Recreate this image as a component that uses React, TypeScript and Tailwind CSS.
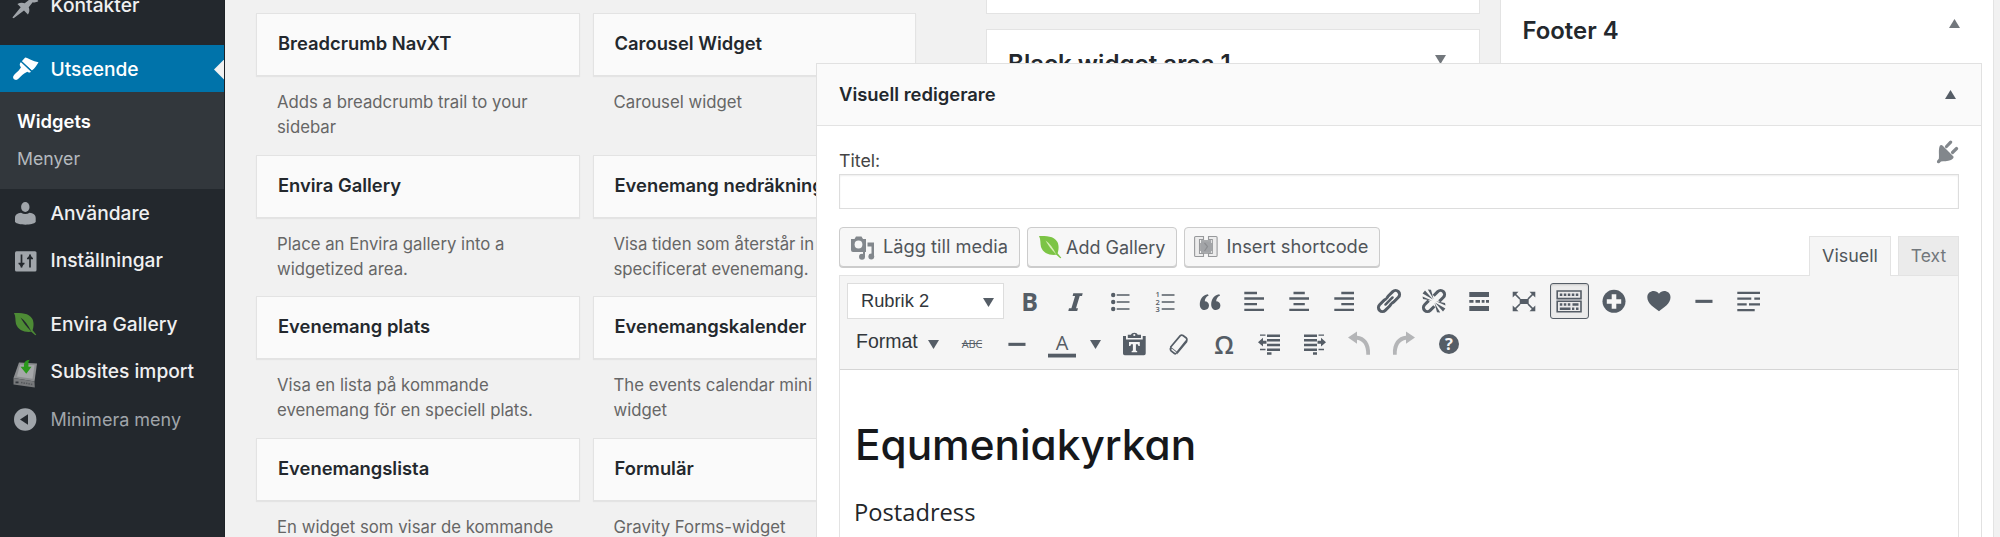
import React from 'react';

type Kids = { children?: React.ReactNode };

function Glyph({ children, className = '' }: Kids & { className?: string }) {
  return (
    <svg width="28" height="28" viewBox="0 0 28 28" fill="currentColor" className={`block shrink-0 overflow-visible ${className}`}>
      {children}
    </svg>
  );
}

/* ---------- sidebar icons ---------- */

const Leaf = ({ dark, light }: { dark: string; light: string }) => (
  <>
    <path d="M3 3C10 3.2 18 2.600 21.400 9C23.400 13 22.400 18 21.600 20.300L25.300 24.700L24.300 25.300L20.300 21.800C13 22.500 7 20 5 14C4 10.500 5 6.500 3 3Z" fill={light} />
    <path d="M9.500 7.500C12 12 15 16 20.300 21.500C17 15 14 10.500 9.500 7.500Z" fill={dark} />
  </>
);

const PinIcon = (
  <Glyph>
    <path d="M2 26.500L10.300 16.300L7 13C9.500 11.500 12 11.300 14.300 12.300L19.500 8.200C19 6 19.400 4 20.500 2.800L28 10C26 11.500 24 11.700 22.300 11.200L18.300 16.200C19.400 18.800 19 21.500 17.500 23.500L13.600 19.600L3.200 27.300Z" transform="translate(-.6 -1)" />
  </Glyph>
);

const BrushIcon = (
  <Glyph>
    <path d="M14.200 2.500C17 3 22 6.500 27.500 7.200C26 9.500 24 13.500 20.800 15.600L10.800 6.300Z" />
    <path d="M10 7.100L20 16.400C19 17.800 17.500 18 16.300 16.800L13.200 18.600C10.500 20 8.300 24 6 24.800C3.500 25.500 1.300 23.300 2.400 21C3.500 18.500 7.500 16.500 9 13.800L10 12.300C8.300 11 8.300 8.500 10 7.100Z" />
    <path d="M10.400 6.700L20.400 16" stroke="#0073aa" strokeWidth="1.100" />
  </Glyph>
);

const UserIcon = (
  <Glyph>
    <ellipse cx="14.300" cy="8" rx="4.200" ry="5" />
    <path d="M4 23V19C4 15.500 6.500 14 10 13.700C12.500 15.300 16 15.300 18.600 13.700C22 14 24.700 15.500 24.700 19V23C22 26.500 7 26.500 4 23Z" />
  </Glyph>
);

const SlidersIcon = (
  <Glyph>
    <rect x="4" y="4.200" width="21.500" height="20.300" rx="1.500" />
    <path d="M10.500 7.500V20.500M7.500 16.500H13.500M19 7.500V20.500M16 11.500H22" stroke="#23282d" strokeWidth="1.700" />
    <path d="M8 17L10.500 20.500L13 17ZM16.500 11L19 7.500L21.500 11Z" fill="#23282d" />
  </Glyph>
);

const DiskIcon = (
  <Glyph>
    <path d="M8 4.500L26 5.500L23.500 23.500L2.500 20Z" fill="#8b8d8f" />
    <path d="M2.500 20L23.500 23.500L23.800 29.500L2.500 26.500Z" fill="#77797b" />
    <path d="M9 6.500L23.500 7.200L21.500 20.800L6 18.500Z" fill="#a5a7a9" />
    <path d="M4.500 23.500h3v1.800h-3z" fill="#32373c" />
    <path d="M10 24.500L21.500 26.500" stroke="#55585b" strokeWidth="1.500" strokeDasharray="1.500 1" />
    <path d="M19.500 1.800C17 2.500 17.500 5 17.500 8.800H20.500L15.300 15.700L9.500 8.800H13C12.800 5 14 1.800 19.500 1.800Z" fill="#2b9a1c" />
  </Glyph>
);

const CollapseIcon = (
  <Glyph>
    <circle cx="14.200" cy="13.500" r="11.200" />
    <path d="M9 13.500L17 8.300V18.700Z" fill="#23282d" />
  </Glyph>
);

/* ---------- toolbar icons ---------- */

const ItalicIcon = (
  <Glyph>
    <path d="M12.300 6.300H21.700L21 9H18.700L15 21.300H17L16.200 24H7.300L8 21.300H10.400L14.100 9H11.600Z" />
  </Glyph>
);

const BulletsIcon = (
  <Glyph>
    <circle cx="7.200" cy="8" r="2.200" />
    <circle cx="7.200" cy="15" r="2.200" />
    <circle cx="7.200" cy="22" r="2.200" />
    <path d="M10.700 8H23.500M10.700 15H23.500M10.700 22H23.500" stroke="currentColor" strokeWidth="1.600" />
  </Glyph>
);

const NumbersIcon = (
  <Glyph>
    <g fontFamily="Open Sans, sans-serif" fontSize="7.500" fontWeight="600">
      <text x="4.500" y="10.200">1</text>
      <text x="4.500" y="17.500">2</text>
      <text x="4.500" y="24.700">3</text>
    </g>
    <path d="M10.700 8H23.500M10.700 15H23.500M10.700 22H23.500" stroke="currentColor" strokeWidth="1.600" />
  </Glyph>
);

const quoteMark = 'M11.800 7.200C6.500 8 3.800 12.500 3.800 17.500C3.800 21 5.800 23 8.600 23C11.200 23 13 21.200 13 18.600C13 16 11.200 14.300 8.800 14.300C8.900 12 10 9.800 12.700 8.600Z';

const QuoteIcon = (
  <Glyph>
    <path d={quoteMark} />
    <path d={quoteMark} transform="translate(11.400)" />
  </Glyph>
);

const Lines = ({ d }: { d: string }) => (
  <Glyph>
    <path d={d} stroke="currentColor" strokeWidth="2.300" fill="none" />
  </Glyph>
);

const LinkIcon = (
  <Glyph>
    <g transform="translate(14 14) rotate(-45)" fill="none">
      <rect x="-13.300" y="-4" width="14.600" height="8" rx="4" stroke="currentColor" strokeWidth="3" />
      <rect x="-1.300" y="-4" width="14.600" height="8" rx="4" stroke="currentColor" strokeWidth="3" />
      <path d="M-5.500 0H5.500" stroke="#f5f5f5" strokeWidth="4.600" strokeLinecap="round" />
      <path d="M-5 0H5" stroke="currentColor" strokeWidth="2.500" strokeLinecap="round" />
    </g>
  </Glyph>
);

const UnlinkIcon = (
  <Glyph>
    <g transform="translate(14 14) rotate(-45)" fill="none" stroke="currentColor">
      <path d="M-3.500 -4H-9.300A4 4 0 0 0 -9.300 4H-3.500M3.500 -4H9.300A4 4 0 0 1 9.300 4H3.500" strokeWidth="3" />
    </g>
    <path d="M2.600 6.500L5 3.500L13 12.500ZM7.800 2.500L11 2.700L13.500 12ZM2.500 9.500L3 12L12 13.800ZM25.400 21.500L23 24.500L15 15.500ZM20.200 25.500L17 25.300L14.500 16ZM25.500 18.500L25 16L16 14.200Z" />
  </Glyph>
);

const MoreIcon = (
  <Glyph>
    <path d="M4.300 5H24V10H4.300ZM4.300 13H8.500V15.800H4.300ZM10.500 13H15V15.800H10.500ZM16.700 13H19.500V15.800H16.700ZM21 13H24V15.800H21ZM4.300 19H24V24H4.300Z" />
  </Glyph>
);

const FullscreenIcon = (
  <Glyph>
    <path d="M9.700 12H18.700V17H9.700Z" />
    <path d="M4 6L10 12M24 6L18 12M4 23L10 17M24 23L18 17" stroke="currentColor" strokeWidth="1.700" />
    <path d="M2.700 4.700H8.500L2.700 10.500ZM25.300 4.700H19.500L25.300 10.500ZM2.700 24.200H8.500L2.700 18.500ZM25.300 24.200H19.500L25.300 18.500Z" />
  </Glyph>
);

const KitchenIcon = (
  <Glyph>
    <path d="M2.200 4H26V11.600H2.200ZM2.200 14.200H26V24.800H2.200Z" fill="none" stroke="currentColor" strokeWidth="1.600" />
    <path d="M4.800 7.800H23.500M4.800 17.500H16" stroke="currentColor" strokeWidth="2.400" strokeDasharray="2.500 1.500" />
    <path d="M17.500 17.500H23.500M4.800 21.700H15.500M17 21.700H19.300M21 21.700H23.500" stroke="currentColor" strokeWidth="2.400" />
  </Glyph>
);

const PlusIcon = (
  <Glyph>
    <circle cx="14" cy="14.300" r="11.500" />
    <path d="M14 7.300V21.700M6.800 14.500H21.200" stroke="#f5f5f5" strokeWidth="4.600" />
  </Glyph>
);

const HeartIcon = (
  <Glyph>
    <path d="M14 24.300C9 20.500 2.300 16.500 2.300 10.300C2.300 4 10.500 2 14 6.700C17.500 2 25.500 4 25.500 10.300C25.500 16.500 19 20.500 14 24.300Z" />
  </Glyph>
);

const DashIcon = (
  <Glyph>
    <path d="M5.400 12.800H22.500V15.900H5.400Z" />
  </Glyph>
);

const ColorIcon = (
  <Glyph>
    <path d="M0 23.700H28V27.500H0Z" />
    <text x="14" y="19.700" textAnchor="middle" fontSize="20" fontFamily="Open Sans, sans-serif">A</text>
  </Glyph>
);

const PasteIcon = (
  <Glyph>
    <path d="M3 6H6V9.500H22.700V6H25.700V23.500Q25.700 25.200 24 25.200H4.700Q3 25.200 3 23.500Z" />
    <path d="M7.800 8V4.800H11C11.500 2 17.200 2 17.700 4.800H21V8Z" />
    <circle cx="14.300" cy="5" r="1.100" fill="#f5f5f5" />
    <path d="M9 12H19.800V16H18.500L17.700 14.300H15.900V20.500L17.200 21.200V22.200H11.600V21.200L12.900 20.500V14.300H11.100L10.300 16H9Z" fill="#f5f5f5" />
  </Glyph>
);

const EraserIcon = (
  <Glyph>
    <path d="M5.500 17.200L15.300 5.700Q16.500 4.500 18 5.500L21.300 8Q22.500 9 21.500 10.500L12.300 22" fill="none" stroke="currentColor" strokeWidth="1.700" />
    <path d="M5.400 16.500L12.700 22.200L11.500 24Q10.300 25.200 9 24.300L5.500 21.500Q4.500 20.300 4.500 18.800ZM12.300 22.500L22.400 9.500V12L12 24.500Z" />
    <path d="M6.800 18.600L11.300 22.200L10.300 23L6.300 20Z" fill="#f5f5f5" />
  </Glyph>
);

const Indent = ({ flip = false }: { flip?: boolean }) => (
  <Glyph>
    <path d={flip ? 'M4 5.700H17M4 10.300H17M4 15H17M4 19.700H17M13 23.500H17' : 'M12 5.700H25M12 10.300H25M12 15H25M12 19.700H25M12 23.500H16.500'} stroke="currentColor" strokeWidth="2.500" />
    <path d={flip ? 'M18.500 5.200H24M18.500 19.500H24' : 'M5 5.200H10.500M5 19.500H10.500'} stroke="currentColor" strokeWidth="1.300" />
    <path d={flip ? 'M26 12.200L21 7.800V10.700H17.500V13.700H21V16.600Z' : 'M3 12.200L8 7.800V10.700H11.500V13.700H8V16.600Z'} />
  </Glyph>
);

const UndoIcon = ({ flip = false }: { flip?: boolean }) => (
  <Glyph className="text-[#b4b5b7]">
    <g transform={flip ? 'translate(28 0) scale(-1 1)' : undefined}>
      <path d="M3 7.500L12 1.500V5.800C20 6.500 25.800 13 25 24.700H21.300C21.500 15.500 18 10.500 12 9.700V13.800Z" />
    </g>
  </Glyph>
);

const HelpIcon = (
  <Glyph>
    <circle cx="14" cy="14" r="10" />
    <text x="14" y="20" textAnchor="middle" fontSize="16.500" fontWeight="700" fontFamily="Open Sans, sans-serif" fill="#f5f5f5">?</text>
  </Glyph>
);

const PlugIcon = (
  <Glyph className="text-[#82878c]">
    <path d="M6 8.500C7 7.500 8 8 9 9L19.500 19.500C20 21 18.500 22 17 23C13.500 24.500 9.500 24 7 24.500L5.500 26C3.500 27 2.300 25.500 3.300 23.500L4.800 21.800C5.500 18.500 4 12.500 6 8.500Z" />
    <path d="M12.500 9.500L16.700 5.200M18.500 15.500L22.600 11.500" stroke="currentColor" strokeWidth="3.200" strokeLinecap="round" />
  </Glyph>
);

const MediaIcon = (
  <Glyph className="text-[#82878c]">
    <path d="M2 6H5.500L7 3.500H12.500L14 6H17V19H4Q2 19 2 17Z" />
    <circle cx="9.500" cy="11.500" r="3.900" fill="#f7f7f7" />
    <path d="M18.500 9.500H25V23.700H22.500V13.500H18.500Z" />
    <circle cx="22.300" cy="23.500" r="2.900" />
    <circle cx="13" cy="23.700" r="3" />
    <path d="M14 19H16V24H14Z" />
  </Glyph>
);

const ShortcodeIcon = (
  <Glyph>
    <path d="M9 7H19V21H9Z" fill="#a9abad" />
    <path d="M6.500 10H21.500V18H6.500Z" fill="#a9abad" />
    <path d="M11.500 3.500H3.700Q2.600 3.500 2.600 4.600V22.400Q2.600 23.500 3.700 23.500H11.500V20.500H7.500V6.500H11.500ZM16.500 3.500H24Q25.100 3.500 25.100 4.600V22.400Q25.100 23.500 24 23.500H16.500V20.500H20.300V6.500H16.500Z" fill="#ececec" stroke="#97999b" strokeWidth="1.100" />
    <path d="M9 8.500H18.800V18.800H9Z" fill="#a2a4a7" />
    <path d="M12.500 10L15.500 13.500L12.500 18" fill="none" stroke="#8b8d90" strokeWidth="1.200" />
  </Glyph>
);

/* ---------- building blocks ---------- */

const Triangle = ({ up = false, className = '' }: { up?: boolean; className?: string }) => (
  <svg width="11" height="9" viewBox="0 0 11 9" fill="currentColor" className={`block shrink-0 ${className}`}>
    <path d={up ? 'M0 9L5.500 0L11 9Z' : 'M0 0H11L5.500 9Z'} />
  </svg>
);

function MenuItem({ icon, label, active = false, muted = false }: { icon: React.ReactNode; label: string; active?: boolean; muted?: boolean }) {
  const tone = active ? 'h-[47.300px] bg-[#0073aa] text-white' : 'h-[47.800px] text-[#a0a5aa]';
  return (
    <li className={`relative flex items-center gap-[11.500px] pl-[11px] ${tone}`}>
      {icon}
      <span className={muted ? 'text-[18px]' : active ? 'pt-px text-[19.200px] font-medium text-white' : 'text-[19.200px] font-medium text-[#f0f0f1]'}>{label}</span>
      {active && (
        <svg width="11.500" height="23" viewBox="0 0 11.500 23" className="absolute top-[12.500px] right-0">
          <path d="M11.500 0V23L0 11.500Z" fill="#f1f1f1" />
        </svg>
      )}
    </li>
  );
}

function Sidebar() {
  return (
    <nav className="w-[225px] shrink-0 overflow-hidden border-r border-[#1d2226] bg-[#23282d] leading-none">
      <ul className="-mt-[18.400px] -mr-px">
        <MenuItem icon={PinIcon} label="Kontakter" />
        <li className="h-[15.600px]" />
        <MenuItem icon={BrushIcon} label="Utseende" active />
        <li>
          <ul className="mr-px bg-[#32373c] pt-[9.500px] pb-[11px] pl-[17px] text-[18.400px] leading-[38.200px]">
            <li className="font-semibold text-white">Widgets</li>
            <li className="text-[17.700px] text-[#b4b9be]">Menyer</li>
          </ul>
        </li>
        <MenuItem icon={UserIcon} label="Användare" />
        <MenuItem icon={SlidersIcon} label="Inställningar" />
        <li className="h-[15.600px]" />
        <MenuItem icon={<Glyph><Leaf dark="#23282d" light="#4d8b35" /></Glyph>} label="Envira Gallery" />
        <MenuItem icon={DiskIcon} label="Subsites import" />
        <MenuItem icon={CollapseIcon} label="Minimera meny" muted />
      </ul>
    </nav>
  );
}

function WidgetCard({ title, text }: { title: string; text: string }) {
  return (
    <article className="h-[141.600px]">
      <h3 className="flex h-[63px] items-center border border-[#e3e3e3] bg-[#fafafa] pb-px pl-[21px] text-[18.380px] font-semibold whitespace-nowrap text-[#23282d] shadow-[0_1px_1px_rgba(0,0,0,0.05)]">
        {title}
      </h3>
      <p className="pt-[14px] pl-[21px] text-[16.750px] leading-[25.300px] whitespace-pre-line text-[#666]">{text}</p>
    </article>
  );
}

const widgets: [string, string][] = [
  ['Breadcrumb NavXT', 'Adds a breadcrumb trail to your\nsidebar'],
  ['Carousel Widget', 'Carousel widget'],
  ['Envira Gallery', 'Place an Envira gallery into a\nwidgetized area.'],
  ['Evenemang nedräkning', 'Visa tiden som återstår in\nspecificerat evenemang.'],
  ['Evenemang plats', 'Visa en lista på kommande\nevenemang för en speciell plats.'],
  ['Evenemangskalender', 'The events calendar mini\nwidget'],
  ['Evenemangslista', 'En widget som visar de kommande'],
  ['Formulär', 'Gravity Forms-widget'],
];

function Cell({ children }: Kids) {
  return <span className="flex w-[44.950px] shrink-0 justify-center">{children}</span>;
}

function MediaButton({ icon, children, className }: Kids & { icon: React.ReactNode; className: string }) {
  return (
    <button className={`flex h-[40px] items-center rounded-[4px] border border-[#ccc] bg-[#f7f7f7] whitespace-nowrap text-[#50555a] shadow-[0_1px_0_#ccc] ${className}`}>
      {icon}
      {children}
    </button>
  );
}

function Toolbar() {
  return (
    <div className="flex h-[94px] flex-col gap-[6.500px] border-b border-[#d5d5d5] bg-[#f5f5f5] pt-[7px] pl-[7px] text-[#555d66]">
      <div className="flex h-[36px] items-center">
        <div className="mr-[3.300px] flex h-[36px] w-[157px] items-center justify-between border border-[#ddd] bg-white pr-[9px] pl-[13px] font-['Liberation_Sans',sans-serif] text-[18.300px] text-[#32373c]">
          <span>Rubrik 2</span>
          <Triangle className="mt-[3px] text-[#555d66]" />
        </div>
        <Cell>
          <span className="font-['Open_Sans',sans-serif] text-[25px] leading-[28px] font-bold">B</span>
        </Cell>
        <Cell>{ItalicIcon}</Cell>
        <Cell>{BulletsIcon}</Cell>
        <Cell>{NumbersIcon}</Cell>
        <Cell>{QuoteIcon}</Cell>
        <Cell><Lines d="M4.300 6H17M4.300 11.500H24M4.300 17.200H17M4.300 22.900H24" /></Cell>
        <Cell><Lines d="M8.500 6H19.800M4.300 11.500H24M8.500 17.200H19.800M4.300 22.900H24" /></Cell>
        <Cell><Lines d="M11.300 6H24M4.300 11.500H24M11.300 17.200H24M4.300 22.900H24" /></Cell>
        <Cell>{LinkIcon}</Cell>
        <Cell>{UnlinkIcon}</Cell>
        <Cell>{MoreIcon}</Cell>
        <Cell>{FullscreenIcon}</Cell>
        <Cell>
          <span className="flex h-[36px] w-[39px] items-center justify-center rounded-[3px] border-[1.500px] border-[#555d66] bg-[#ebebeb] shadow-[inset_0_1px_2px_rgba(0,0,0,0.15)]">
            {KitchenIcon}
          </span>
        </Cell>
        <Cell>{PlusIcon}</Cell>
        <Cell>{HeartIcon}</Cell>
        <Cell>{DashIcon}</Cell>
        <Cell><Lines d="M2.300 5.800H25M2.300 11.700H16.300M19.300 11.700H25M2.300 17.400H11.700M14 17.400H25M2.300 23.100H19.700" /></Cell>
      </div>
      <div className="flex h-[36px] items-center">
        <div className="flex w-[102.500px] items-center gap-[10px] pl-[9px] font-['Liberation_Sans',sans-serif] text-[19.500px] text-[#32373c]">
          <span className="-mt-[4px]">Format</span>
          <Triangle className="mt-[2px] text-[#555d66]" />
        </div>
        <Cell>
          <span className="font-['Open_Sans',sans-serif] text-[11px] leading-[28px] tracking-[-0.200px] line-through">ABC</span>
        </Cell>
        <Cell>{DashIcon}</Cell>
        <Cell>{ColorIcon}</Cell>
        <span className="flex w-[27.500px] pl-[5.500px]">
          <Triangle className="mt-[2px]" />
        </span>
        <Cell>{PasteIcon}</Cell>
        <Cell>{EraserIcon}</Cell>
        <Cell>
          <span className="font-['Open_Sans',sans-serif] text-[25px] leading-[28px] font-semibold">Ω</span>
        </Cell>
        <Cell><Indent /></Cell>
        <Cell><Indent flip /></Cell>
        <Cell><UndoIcon /></Cell>
        <Cell><UndoIcon flip /></Cell>
        <Cell>{HelpIcon}</Cell>
      </div>
    </div>
  );
}

function EditorPanel() {
  return (
    <section className="absolute top-[63px] left-[816px] flex h-[520px] w-[1166px] flex-col border border-[#e1e1e1] bg-white">
      <header className="flex h-[62px] shrink-0 items-center justify-between border-b border-[#e3e3e3] bg-[#fafafa] pr-[25px] pl-[22px] text-[18.400px] font-semibold text-[#23282d]">
        Visuell redigerare
        <Triangle up className="text-[#555d66]" />
      </header>
      <div className="flex grow flex-col px-[22px] pt-[11px]">
        <div className="flex h-[37px] justify-between">
          <label className="pt-[12px] text-[17.800px] leading-[24px] text-[#444]">Titel:</label>
          <span className="-mr-[3px]">{PlugIcon}</span>
        </div>
        <input className="h-[35px] shrink-0 border border-[#ddd] bg-white shadow-[inset_0_1px_2px_rgba(0,0,0,0.07)] outline-none" />
        <div className="mt-[18px] flex h-[48px] shrink-0 justify-between">
          <div className="flex items-start gap-[7.500px]">
            <MediaButton className="w-[180.500px] gap-[6px] pl-[9px] text-[18.250px]" icon={MediaIcon}>Lägg till media</MediaButton>
            <MediaButton className="w-[149.500px] gap-[2px] pl-[8px] text-[18px]" icon={<Glyph><Leaf dark="#d9efb8" light="#7cc445" /></Glyph>}>Add Gallery</MediaButton>
            <MediaButton className="w-[196px] gap-[6.500px] pl-[7px] text-[18.300px]" icon={ShortcodeIcon}>Insert shortcode</MediaButton>
          </div>
          <div className="flex items-end gap-[7px]">
            <span className="relative z-10 -mb-px flex h-[40px] w-[82px] items-center justify-center border border-b-0 border-[#e3e3e3] bg-[#f5f5f5] text-[17.900px] text-[#50555a]">Visuell</span>
            <span className="flex h-[39px] w-[61px] items-center justify-center border border-b-0 border-[#e3e3e3] bg-[#ebebeb] text-[17.500px] text-[#72777c]">Text</span>
          </div>
        </div>
        <div className="grow border border-[#e3e3e3]">
          <Toolbar />
          <div className="pl-[15px]">
            <h2 className="pt-[50px] text-[42.300px] leading-[50px] font-medium text-[#16181b] [font-feature-settings:'cv11']">Equmeniakyrkan</h2>
            <p className="-ml-px pt-[26px] font-['Open_Sans',sans-serif] text-[23.700px] leading-[32px] text-[#23262a]">Postadress</p>
          </div>
        </div>
      </div>
    </section>
  );
}

export default function App() {
  return (
    <div className="relative flex h-[537px] w-[2000px] overflow-hidden bg-[#f1f1f1] font-[Inter,sans-serif]">
      <Sidebar />
      <main className="flex grow">
        <div className="mt-[13px] ml-[31px] grid h-[566px] w-[660px] shrink-0 grid-cols-2 gap-x-[13px]">
          {widgets.map(([title, text]) => (
            <WidgetCard key={title} title={title} text={text} />
          ))}
        </div>
        <div className="ml-[70px] flex w-[494px] shrink-0 flex-col gap-[15px]">
          <div className="h-[13.500px] shrink-0 border border-t-0 border-[#e3e3e3] bg-white" />
          <h2 className="flex h-[70px] items-start justify-between border border-[#e3e3e3] bg-white pt-[20px] pr-[33px] pl-[21px] text-[24.100px] leading-[27px] font-semibold text-[#23282d]">
            Black widget area 1
            <Triangle className="mt-[5px] text-[#72777c]" />
          </h2>
        </div>
        <div className="ml-[20px] flex w-[494px] shrink-0 items-start justify-between border-x border-[#e3e3e3] bg-white pt-[17px] pr-[33px] pl-[21.500px] text-[23.900px] leading-[27px] font-semibold text-[#23282d]">
          Footer 4
          <Triangle up className="mt-[2px] text-[#72777c]" />
        </div>
      </main>
      <EditorPanel />
    </div>
  );
}
